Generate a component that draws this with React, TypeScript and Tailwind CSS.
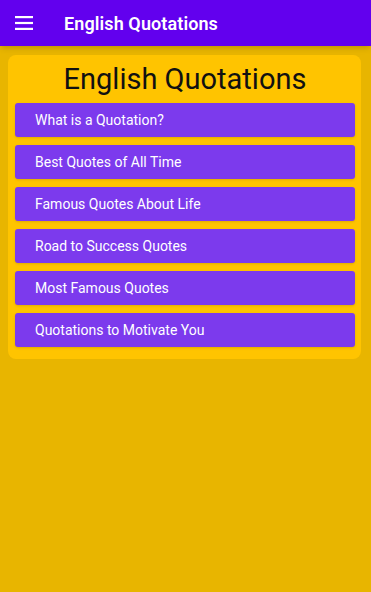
const ITEMS = [
  'What is a Quotation?',
  'Best Quotes of All Time',
  'Famous Quotes About Life',
  'Road to Success Quotes',
  'Most Famous Quotes',
  'Quotations to Motivate You',
]

export default function App() {
  return (
    <div
      className="w-[371px] h-[592px] bg-[#e8b500] flex flex-col"
      style={{ fontFamily: 'Roboto, "Noto Sans", sans-serif' }}
    >
      <header className="h-[46px] bg-[#6200ee] flex items-center px-[15px] shadow-md shrink-0">
        <svg width="18" height="14" viewBox="0 0 18 14" className="text-white">
          <rect x="0" y="0" width="18" height="2.2" fill="currentColor" />
          <rect x="0" y="5.9" width="18" height="2.2" fill="currentColor" />
          <rect x="0" y="11.8" width="18" height="2.2" fill="currentColor" />
        </svg>
        <h1 className="ml-[31px] text-white text-[18px] font-semibold tracking-[0.1px]">English Quotations</h1>
      </header>

      <main className="pl-[8px] pt-[9px]">
        <section className="w-[353px] bg-[#ffc400] rounded-[8px] pl-[7px] pr-[6px] pb-[12px]">
          <h2 className="text-center text-[29px] leading-[48px] text-[#111] font-normal">English Quotations</h2>
          <div className="flex flex-col gap-[8px]">
            {ITEMS.map(label => (
              <button
                key={label}
                className="h-[34px] bg-[#7c3aed] rounded-[3px] text-left pl-[20px] text-white text-[14px] shadow-sm"
              >
                {label}
              </button>
            ))}
          </div>
        </section>
      </main>
    </div>
  )
}
